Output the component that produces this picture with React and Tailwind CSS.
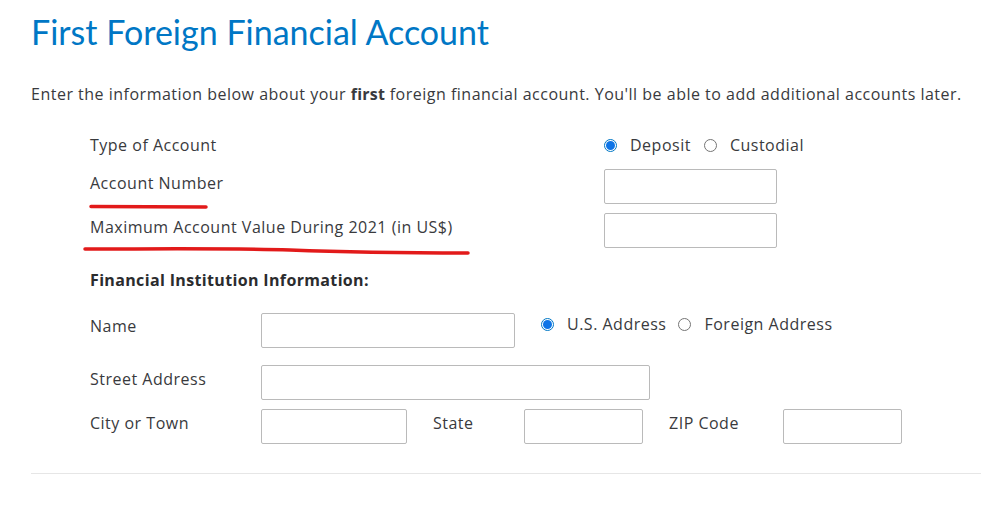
import React from 'react'

function Radio({ checked, label }) {
  return (
    <label className="flex items-center">
      {checked ? (
        <span className="flex h-[13px] w-[13px] items-center justify-center rounded-full border border-[#0077c5]">
          <span className="h-[9px] w-[9px] rounded-full bg-[#0d74e7]" />
        </span>
      ) : (
        <span className="h-[13px] w-[13px] rounded-full border border-[#757575]" />
      )}
      <span className="ml-[13px]">{label}</span>
    </label>
  )
}

function Field({ className = '' }) {
  return (
    <div className={`h-[35px] rounded-[2px] border border-[#bababa] bg-white ${className}`} />
  )
}

export default function App() {
  return (
    <div className="relative min-h-[529px] w-[981px] bg-white font-['Open_Sans',sans-serif] text-[16px] tracking-[0.5px] text-[#393a3d]">
      <div className="pl-[31px] pt-[12px]">
        <h1 className="font-['Lato',sans-serif] text-[34px] leading-[40px] tracking-normal text-[#0077c5]">First Foreign Financial Account</h1>
        <p className="mt-[30px] leading-[24px]">
          Enter the information below about your <b className="tracking-[0.2px]">first</b> foreign financial account. You'll be able to add additional accounts later.
        </p>

        <div className="ml-[59px] mt-[26px] grid grid-cols-[514px_173px]">
          <div className="flex h-[26px] items-center">Type of Account</div>
          <div className="flex h-[26px] items-center gap-[13px]">
            <Radio checked label="Deposit" />
            <Radio label="Custodial" />
          </div>

          <div className="mt-[11px] flex h-[35px] items-center pb-[8px]">Account Number</div>
          <Field className="mt-[11px]" />

          <div className="mt-[9px] flex h-[35px] items-center pb-[8px]">Maximum Account Value During 2021 (in US$)</div>
          <Field className="mt-[9px]" />
        </div>

        <div className="ml-[59px] mt-[20px] font-bold leading-[24px] tracking-[0.35px] text-[#2b2c2e]">Financial Institution Information:</div>

        <div className="ml-[59px] mt-[21px] flex items-start">
          <div className="flex h-[35px] w-[171px] items-center pb-[10px]">Name</div>
          <Field className="w-[254px]" />
          <div className="ml-[26px] flex h-[22px] items-center gap-[12px]">
            <Radio checked label="U.S. Address" />
            <Radio label="Foreign Address" />
          </div>
        </div>

        <div className="ml-[59px] mt-[17px] flex items-start">
          <div className="flex h-[35px] w-[171px] items-center pb-[8px]">Street Address</div>
          <Field className="w-[389px]" />
        </div>

        <div className="ml-[59px] mt-[9px] flex items-start">
          <div className="flex h-[35px] w-[171px] items-center pb-[8px]">City or Town</div>
          <Field className="w-[146px]" />
          <div className="ml-[26px] flex h-[35px] w-[91px] items-center pb-[8px]">State</div>
          <Field className="w-[119px]" />
          <div className="ml-[26px] flex h-[35px] w-[114px] items-center pb-[8px]">ZIP Code</div>
          <Field className="w-[119px]" />
        </div>

        <div className="mt-[29px] border-t border-[#e6e6e6]" />
      </div>

      <svg className="pointer-events-none absolute left-0 top-0" width="981" height="529">
        <path d="M91 206.5 L206 207" stroke="#e21a1a" strokeWidth="3.5" strokeLinecap="round" fill="none" />
        <path d="M85 249 C150 249 230 248 290 250 C340 252 400 253 468 253" stroke="#e21a1a" strokeWidth="3.5" strokeLinecap="round" fill="none" />
      </svg>
    </div>
  )
}
